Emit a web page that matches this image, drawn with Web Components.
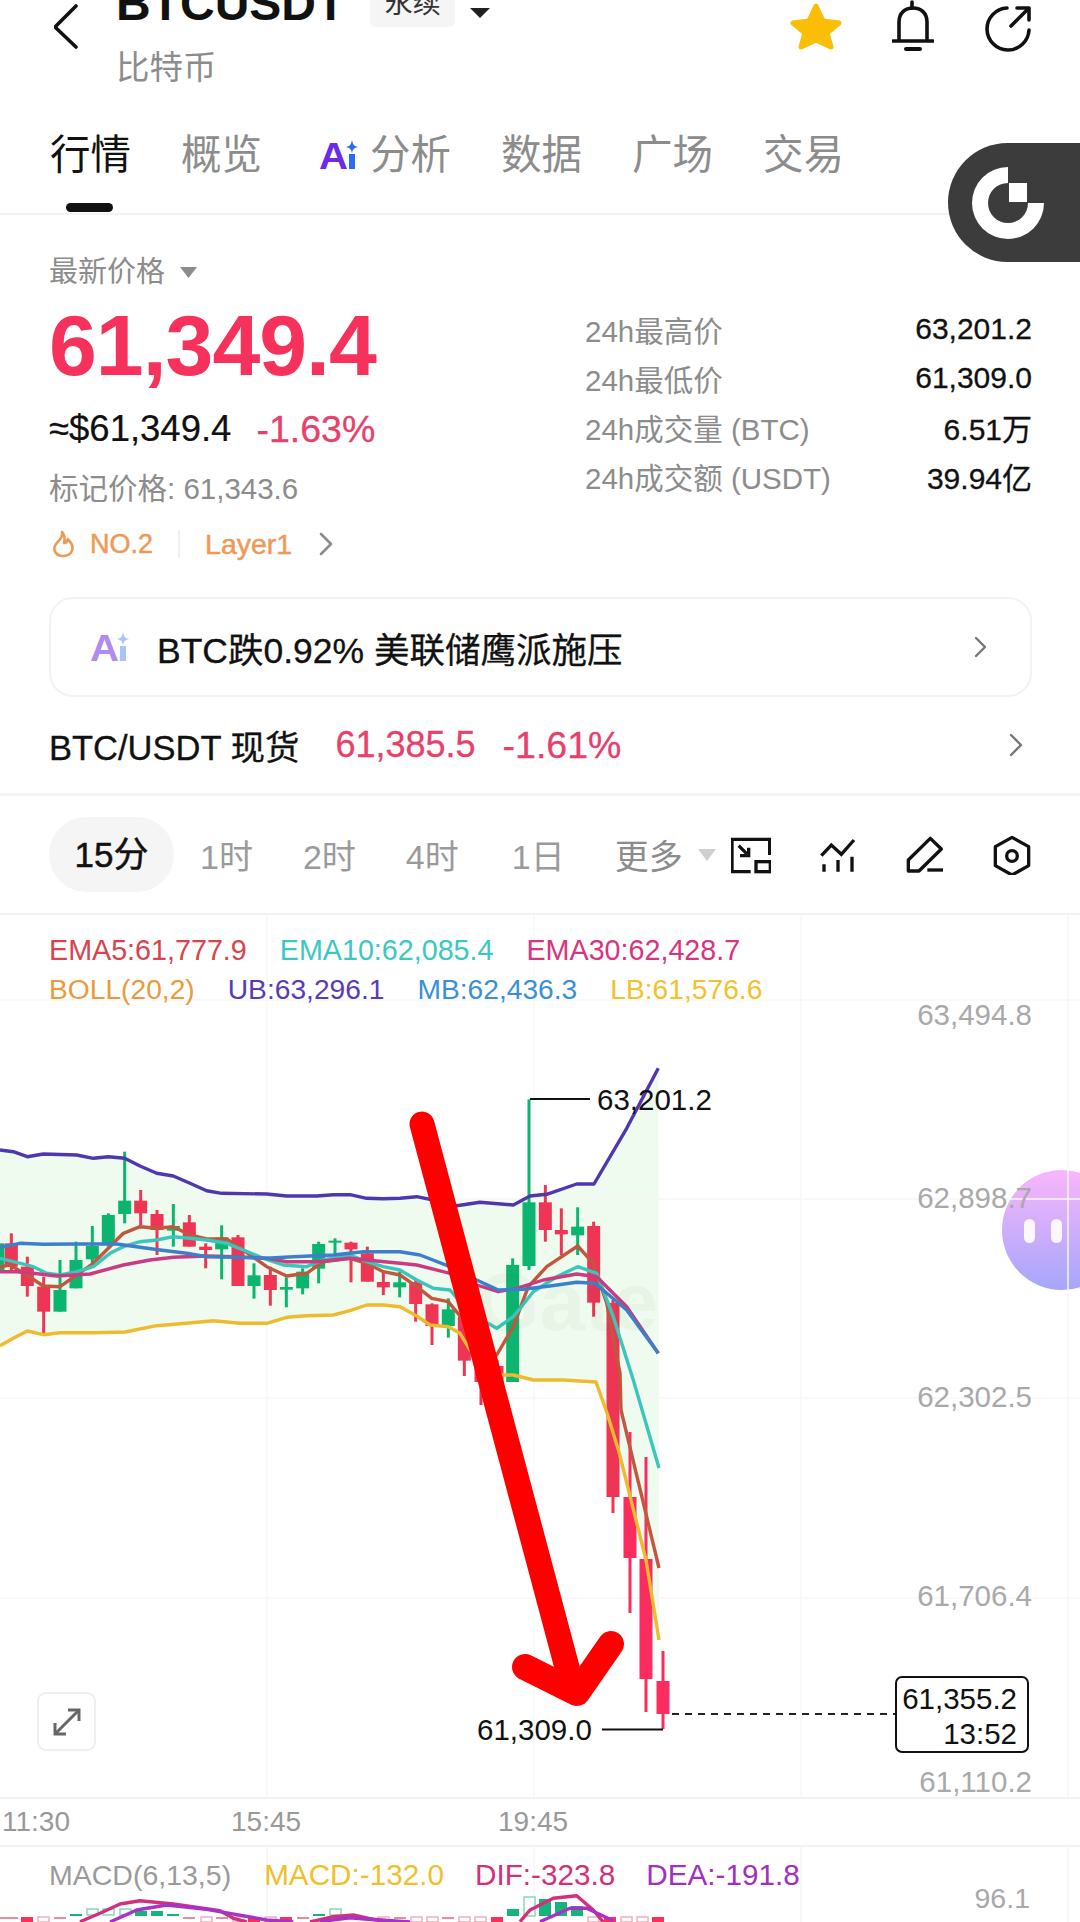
<!DOCTYPE html>
<html lang="zh">
<head>
<meta charset="utf-8">
<title>BTCUSDT</title>
<style>
html, body { margin: 0; padding: 0; background: #fff; }
body { font-family: "Liberation Sans", "Noto Sans CJK SC", sans-serif; }
</style>
</head>
<body>
<trade-page>
    <app-header></app-header>
    <market-tabs></market-tabs>
    <price-panel></price-panel>
    <news-card>BTC跌0.92% 美联储鹰派施压</news-card>
    <spot-row></spot-row>
    <interval-bar></interval-bar>
    <kline-chart></kline-chart>
    <time-axis></time-axis>
    <macd-panel></macd-panel>
    <gate-tab></gate-tab>
    <bot-bubble></bot-bubble>
</trade-page>

<script>
const FONT = '"Liberation Sans", "Noto Sans CJK SC", sans-serif';

class TradePage extends HTMLElement {
    constructor() {
        super();
        this.attachShadow({ mode: 'open' });
    }
    connectedCallback() {
        this.shadowRoot.innerHTML = `
            <style>
                :host { display: block; position: relative; width: 1080px; height: 1922px; overflow: hidden; background: #fff; font-family: ${FONT}; }
            </style>
            <slot></slot>
        `;
    }
}

class AppHeader extends HTMLElement {
    constructor() {
        super();
        this.attachShadow({ mode: 'open' });
    }
    connectedCallback() {
        this.shadowRoot.innerHTML = `
            <style>
                :host { display: flex; height: 118px; padding: 0 48px 0 54px; box-sizing: border-box; }
                .back { width: 24px; height: 52px; flex: none; margin-right: 38px; }
                .titles { flex: 1; }
                .line { display: flex; align-items: center; height: 48px; margin-top: -20px; }
                h1 { margin: 0; font-size: 48px; line-height: 48px; font-weight: 700; color: #111; }
                .badge { margin-left: 25px; width: 85px; height: 46px; background: #f5f5f5; border-radius: 6px; font-size: 28px; line-height: 46px; text-align: center; color: #333; }
                .caret { margin: 18px 0 0 15px; width: 20px; height: 10px; }
                .coin { margin-top: 20px; font-size: 33.5px; line-height: 40px; color: #8c8c8c; }
                .icons { display: flex; gap: 50px; flex: none; }
                .icons svg { height: 52px; display: block; }
            </style>
            <svg class="back" viewBox="54 0 24 52" fill="none" stroke="#111" stroke-width="3.6" stroke-linecap="round" stroke-linejoin="round">
                <path d="M76 6 L55 27 L76 47"/>
            </svg>
            <div class="titles">
                <div class="line">
                    <h1>BTCUSDT</h1>
                    <span class="badge">永续</span>
                    <svg class="caret" viewBox="0 0 20 10"><path d="M0 0 H20 L10 10 Z" fill="#222"/></svg>
                </div>
                <div class="coin">比特币</div>
            </div>
            <div class="icons">
                <svg style="width:52px" viewBox="790 0 52 52">
                    <path d="M816 6 L823 21 L839 23 L827 33 L831 47 L816 40 L801 47 L805 33 L793 23 L809 21 Z" fill="#fbbe07" stroke="#fbbe07" stroke-width="5" stroke-linejoin="round"/>
                </svg>
                <svg style="width:42px" viewBox="892 0 42 52" fill="none" stroke="#111" stroke-width="3.6" stroke-linecap="round">
                    <path d="M912 2 V8"/>
                    <path d="M899 40 V22 C899 13 905 8 913 8 C921 8 927 13 927 22 V40"/>
                    <path d="M893 41 H933"/>
                    <path d="M906 49 H920" stroke-width="4"/>
                </svg>
                <svg style="width:47px;margin-left:1px" viewBox="985 0 47 52" fill="none" stroke="#111" stroke-width="3.6" stroke-linecap="round" stroke-linejoin="round">
                    <path d="M1007 8 A21 21 0 1 0 1029 30"/>
                    <path d="M1011 26 L1028 9"/>
                    <path d="M1017 8 H1029 V20"/>
                </svg>
            </div>
        `;
    }
}

class AiMark extends HTMLElement {
    static get observedAttributes() {
        return ['soft'];
    }
    constructor() {
        super();
        this.attachShadow({ mode: 'open' });
    }
    connectedCallback() {
        const soft = this.hasAttribute('soft');
        const a = soft ? '#b08cf0' : '#6a2ce6';
        const b = soft ? '#a9c4f7' : '#2a6cf6';
        this.shadowRoot.innerHTML = `
            <style>
                :host { display: inline-block; width: 40px; height: 32px; }
                svg { display: block; width: 100%; height: 100%; overflow: visible; }
                text { font: 700 36px/32px "Liberation Sans", sans-serif; }
            </style>
            <svg viewBox="0 0 40 32">
                <text x="0" y="30" fill="${a}" textLength="29" lengthAdjust="spacingAndGlyphs">A</text>
                <rect x="30" y="15" width="6" height="15" fill="${b}"/>
                <path d="M33 1 C34 6 35 7 39 8 C35 9 34 10 33 14 C32 10 31 9 27 8 C31 7 32 6 33 1 Z" fill="${b}"/>
            </svg>
        `;
    }
}

class MarketTabs extends HTMLElement {
    constructor() {
        super();
        this.attachShadow({ mode: 'open' });
    }
    connectedCallback() {
        this.shadowRoot.innerHTML = `
            <style>
                :host { display: flex; align-items: flex-start; position: relative; gap: 50px; height: 97px; padding: 17px 0 0 50px; box-sizing: border-box; border-bottom: 2px solid #f2f2f2; font-size: 40.5px; line-height: 40px; color: #8c8c8c; }
                .on { color: #111; position: relative; }
                .on::after { content: ""; position: absolute; left: 16px; top: 68px; width: 47px; height: 9px; border-radius: 5px; background: #111; }
                .ai { display: flex; align-items: center; gap: 11px; margin-left: 7px; height: 40px; }
            </style>
            <span class="on">行情</span>
            <span>概览</span>
            <span class="ai"><ai-mark></ai-mark><span>分析</span></span>
            <span>数据</span>
            <span>广场</span>
            <span>交易</span>
        `;
    }
}

class StatRow extends HTMLElement {
    constructor() {
        super();
        this.attachShadow({ mode: 'open' });
    }
    connectedCallback() {
        this.shadowRoot.innerHTML = `
            <style>
                :host { display: flex; justify-content: space-between; align-items: center; height: 49px; }
                .k { font-size: 29.5px; color: #8c8c8c; }
                .v { font-size: 30px; color: #111; -webkit-text-stroke: .3px #111; }
            </style>
            <span class="k">${this.getAttribute('label')}</span>
            <span class="v"><slot></slot></span>
        `;
    }
}

class PricePanel extends HTMLElement {
    constructor() {
        super();
        this.attachShadow({ mode: 'open' });
    }
    connectedCallback() {
        this.shadowRoot.innerHTML = `
            <style>
                :host { display: grid; grid-template-columns: 536px 1fr; padding: 39px 48px 35px 49px; }
                .head { display: flex; align-items: center; gap: 15px; font-size: 29px; line-height: 36px; color: #8c8c8c; height: 36px; }
                .head svg { width: 17px; height: 11px; }
                .big { margin-top: 12px; font-size: 86px; line-height: 86px; font-weight: 700; letter-spacing: -1px; color: #f6315b; }
                .sub { display: flex; gap: 25px; margin-top: 21px; font-size: 36.5px; line-height: 40px; color: #111; -webkit-text-stroke: .2px #111; }
                .sub .pct { font-size: 37.5px; color: #e8406a; -webkit-text-stroke: .3px #e8406a; }
                .mark { margin-top: 22px; font-size: 29.5px; line-height: 36px; color: #8c8c8c; }
                .tags { display: flex; align-items: center; margin-top: 19px; height: 36px; font-size: 27px; color: #ee9a57; -webkit-text-stroke: .5px #ee9a57; }
                .tags .fire { width: 24px; height: 28px; margin: 0 15px 0 2px; }
                .tags .sep { width: 2px; height: 28px; background: #f0f0f0; margin: 0 25px; }
                .tags .layer { font-size: 28.5px; }
                .tags .go { width: 14px; height: 24px; margin-left: 27px; }
                .stats { margin-top: 50px; }
            </style>
            <div>
                <div class="head">最新价格 <svg viewBox="0 0 17 11"><path d="M0 0 H17 L8.5 11 Z" fill="#8c8c8c"/></svg></div>
                <div class="big">61,349.4</div>
                <div class="sub"><span>≈$61,349.4</span><span class="pct">-1.63%</span></div>
                <div class="mark">标记价格: 61,343.6</div>
                <div class="tags">
                    <svg class="fire" viewBox="0 0 24 28" fill="none" stroke="#ee9a57" stroke-width="2.6" stroke-linejoin="round"><path d="M11 2 C12 7 9 9 5 14 C1 20 5 26 12 26 C19 26 23 21 21 15 C20 12 18 11 17 9 C16 12 15 13 13 13 C14 9 14 5 11 2 Z"/></svg>
                    <span>NO.2</span>
                    <span class="sep"></span>
                    <span class="layer">Layer1</span>
                    <svg class="go" viewBox="0 0 14 24" fill="none" stroke="#8c8c8c" stroke-width="2.6" stroke-linecap="round" stroke-linejoin="round"><path d="M2 2 L12 12 L2 22"/></svg>
                </div>
            </div>
            <div class="stats">
                <stat-row label="24h最高价">63,201.2</stat-row>
                <stat-row label="24h最低价">61,309.0</stat-row>
                <stat-row label="24h成交量 (BTC)">6.51万</stat-row>
                <stat-row label="24h成交额 (USDT)">39.94亿</stat-row>
            </div>
        `;
    }
}

class NewsCard extends HTMLElement {
    constructor() {
        super();
        this.attachShadow({ mode: 'open' });
    }
    connectedCallback() {
        this.shadowRoot.innerHTML = `
            <style>
                :host { display: flex; align-items: center; height: 100px; margin: 0 48px 0 49px; padding: 0 42px 0 39px; box-sizing: border-box; border: 2px solid #f3f3f3; border-radius: 24px; font-size: 35.5px; color: #111; -webkit-text-stroke: .3px #111; }
                ai-mark { margin-right: 27px; }
                .t { flex: 1; }
                svg { width: 14px; height: 24px; }
            </style>
            <ai-mark soft></ai-mark>
            <span class="t"><slot></slot></span>
            <svg viewBox="0 0 14 24" fill="none" stroke="#777" stroke-width="2.4" stroke-linecap="round" stroke-linejoin="round"><path d="M2 3 L11 12 L2 21"/></svg>
        `;
    }
}

class SpotRow extends HTMLElement {
    constructor() {
        super();
        this.attachShadow({ mode: 'open' });
    }
    connectedCallback() {
        this.shadowRoot.innerHTML = `
            <style>
                :host { display: flex; align-items: center; height: 99px; padding: 0 56px 0 49px; box-sizing: border-box; border-bottom: 3px solid #f3f3f3; font-size: 34.5px; color: #111; }
                .pair { -webkit-text-stroke: .3px #111; margin-right: 36px; }
                .p { font-size: 36px; color: #e8406a; -webkit-text-stroke: .3px #e8406a; margin-right: 27px; }
                .pc { font-size: 37.5px; margin-right: 0; }
                .g { flex: 1; }
                svg { width: 16px; height: 26px; }
            </style>
            <span class="pair">BTC/USDT 现货</span>
            <span class="p">61,385.5</span>
            <span class="p pc">-1.61%</span>
            <span class="g"></span>
            <svg viewBox="0 0 16 26" fill="none" stroke="#777" stroke-width="2.4" stroke-linecap="round" stroke-linejoin="round"><path d="M3 3 L13 13 L3 23"/></svg>
        `;
    }
}

class IntervalBar extends HTMLElement {
    constructor() {
        super();
        this.attachShadow({ mode: 'open' });
    }
    connectedCallback() {
        this.shadowRoot.innerHTML = `
            <style>
                :host { display: flex; align-items: center; height: 119px; padding: 0 44px 0 49px; box-sizing: border-box; border-bottom: 2px solid #f3f3f3; font-size: 34px; color: #9a9a9a; }
                .pill { width: 125px; height: 75px; line-height: 75px; text-align: center; font-size: 35px; background: #f5f5f5; border-radius: 38px; color: #111; -webkit-text-stroke: .5px #111; margin-right: 26px; flex: none; }
                .i { margin-right: 50px; }
                .i.day { margin-left: 3px; margin-right: 47px; }
                .more { margin-left: 3px; margin-right: 15px; color: #8c8c8c; }
                .c { width: 18px; height: 12px; margin-right: 15px; flex: none; }
                .tools { display: flex; gap: 47px; flex: none; }
                .tools svg { width: 40px; height: 40px; display: block; }
            </style>
            <span class="pill">15分</span>
            <span class="i">1时</span>
            <span class="i">2时</span>
            <span class="i">4时</span>
            <span class="i day">1日</span>
            <span class="more">更多</span>
            <svg class="c" viewBox="0 0 18 12"><path d="M0 0 H18 L9 12 Z" fill="#cfcfcf"/></svg>
            <div class="tools">
                <svg viewBox="39 30 120 120" fill="none" stroke="#111" stroke-width="10" stroke-linejoin="miter">
                    <path d="M98 140 H42 V43 H155 V90"/>
                    <rect x="114" y="110" width="43" height="30"/>
                    <path d="M62 62 L92 92 M66 92 H92 V68"/>
                </svg>
                <svg viewBox="300 30 120 120" fill="none" stroke="#111" stroke-width="10">
                    <path d="M310 92 L340 60 L370 88 L408 45"/>
                    <path d="M318 118 V140 M360 105 V140 M402 95 V140"/>
                </svg>
                <svg viewBox="561 30 120 120" fill="none" stroke="#111" stroke-width="10" stroke-linejoin="round">
                    <path d="M571 138 V105 L637 40 L670 72 L603 138 Z"/>
                    <path d="M628 135 H675"/>
                </svg>
                <svg viewBox="822 30 120 120" fill="none" stroke="#111" stroke-width="10" stroke-linejoin="round">
                    <path d="M882 37 L932 65 V122 L882 150 L832 122 V65 Z"/>
                    <circle cx="882" cy="93" r="16"/>
                </svg>
            </div>
        `;
    }
}

// points read off the reference crops, x/3 and y/3 from each crop's corner
const crop = (list, x0, y0) => list.map(([x, y]) => [x / 3 + x0, y / 3 + y0]);
const full = (list) => list.map(([x, y]) => [x, y]);
const pts = (list) => list.map(([x, y]) => `${x.toFixed(1)},${y.toFixed(1)}`).join(' ');

const UB = [...crop([[0,330],[40,335],[82,350],[130,342],[230,345],[280,355],[325,350],[374,355],[420,378],[470,400],[520,408],[570,430],[620,452],[665,460],[800,462],[860,468],[950,468],[1000,464],[1050,464],[1100,475],[1150,476]], 0, 1040),
    ...crop([[0,475],[50,470],[100,480],[170,497],[240,487],[340,495],[390,468],[440,463],[530,432],[582,432],[680,265],[775,85]], 400, 1040)];
const LB = [...crop([[0,917],[40,895],[82,873],[130,884],[180,878],[280,878],[375,876],[470,857],[560,850],[640,842],[720,850],[800,850],[860,832],[920,827],[1000,825],[1050,812],[1100,795],[1150,795]], 0, 1040),
    ...crop([[0,800],[50,828],[90,855],[145,860],[180,880],[210,930],[300,1005],[340,1005],[400,1020],[490,1020]], 400, 1040),
    ...full([[596,1382],[607,1413],[619,1452],[646,1560],[659,1640]])];
const EMA5 = [...crop([[0,680],[30,675],[80,705],[130,738],[180,740],[230,705],[280,670],[325,625],[370,580],[420,560],[470,565],[520,560],[570,585],[620,597],[680,597],[730,630],[800,680],[860,708],[920,700],[970,665],[1050,655],[1100,670],[1150,695]], 0, 1040),
    ...crop([[0,705],[50,740],[95,775],[145,785],[190,840],[240,925],[290,945],[340,860],[385,740],[440,680],[533,618],[580,670],[620,790],[660,1000]], 400, 1040),
    ...full([[621,1410],[659,1568]])];
const EMA10 = [...crop([[0,655],[40,665],[100,680],[140,700],[180,705],[230,695],[280,680],[330,640],[370,620],[420,605],[470,600],[520,590],[570,595],[620,600],[680,610],[730,630],[790,655],[850,675],[920,680],[970,660],[1050,645],[1100,665],[1150,680]], 0, 1040),
    ...crop([[0,690],[50,720],[100,745],[150,750],[210,820],[290,865],[340,830],[400,755],[470,710],[533,680],[590,700],[640,830],[700,1020]], 400, 1040),
    ...full([[659,1468]])];
const EMA30 = [...crop([[0,695],[50,695],[100,700],[170,708],[270,702],[370,675],[450,660],[520,652],[620,648],[700,650],[800,655],[860,665],[950,665],[1050,655],[1100,660]], 0, 1040),
    ...crop([[0,670],[50,675],[150,700],[230,735],[295,755],[350,745],[430,720],[530,702],[590,710],[680,800],[775,940]], 400, 1040)];
const MB = [...crop([[0,622],[60,610],[130,613],[230,612],[350,612],[420,622],[480,630],[560,640],[620,650],[720,652],[800,655],[880,650],[1000,645],[1090,635]], 0, 1040),
    ...crop([[0,635],[60,645],[150,680],[230,720],[295,750],[370,748],[450,738],[530,727],[585,730],[680,810],[775,940]], 400, 1040)];

const R = '#ee3554', G = '#0cb56f', R2 = '#fb2c5e';
// x, wick top, wick bottom, body top, body bottom, colour
const CANDLES = [
    ...[
        [-6,610,735,610,690,G],[34,580,690,610,680,R],[82,650,770,680,738,R],[131,710,880,740,815,R],[180,660,815,750,815,G],
        [228,605,745,660,745,G],[277,558,680,618,658,G],[325,520,620,525,615,G],[374,335,550,482,522,G],[422,450,555,482,520,R],
        [471,510,645,522,570,R],[520,492,620,558,572,G],[568,525,620,547,620,R],[617,610,685,620,630,R],[665,556,718,592,628,G],
        [714,585,738,592,738,R],[762,670,776,706,738,G],[811,680,797,705,750,R],[859,712,802,741,749,G],[908,685,763,695,745,G],
        [956,605,730,612,686,G],[1005,595,650,602,608,G],[1053,605,727,608,628,R],[1102,620,725,640,725,R],[1150,695,765,726,742,R],
        [1199,695,772,727,742,G],[1247,720,845,727,792,R],
    ].map(([x, a, b, c, d, col]) => [x / 3, a / 3 + 1040, b / 3 + 1040, c / 3 + 1040, d / 3 + 1040, col]),
    ...[
        [96,790,915,793,858,R],[145,775,893,808,858,G],[193,830,1008,830,962,R],
        [338,655,1026,675,1026,G],[387,178,690,487,678,G],[436,435,605,487,570,R],[484,505,645,570,583,R],[533,502,645,560,586,G],[581,545,830,558,788,R],
    ].map(([x, a, b, c, d, col]) => [x / 3 + 400, a / 3 + 1040, b / 3 + 1040, c / 3 + 1040, d / 3 + 1040, col]),
    [481,1355,1405,1360,1382,R],[497,1360,1392,1366,1384,R],
    [613,1300,1513,1303,1497,R],[630,1432,1613,1497,1558,R2],[646,1457,1712,1559,1679,R2],[663,1651,1729,1681,1714,R2],
];

class KlineChart extends HTMLElement {
    constructor() {
        super();
        this.attachShadow({ mode: 'open' });
    }
    connectedCallback() {
        this.render();
    }
    candles() {
        return CANDLES.map(([x, a, b, c, d, col]) => `
            <rect x="${x - 1.5}" y="${a}" width="3" height="${b - a}" fill="${col}"/>
            <rect x="${x - 6.5}" y="${c}" width="13" height="${d - c}" fill="${col}"/>`).join('');
    }
    lines() {
        const line = (list, col) => `<polyline points="${pts(list)}" fill="none" stroke="${col}" stroke-width="3.4" stroke-linejoin="round"/>`;
        return line(LB, '#eeba2e') + line(EMA5, '#c2573f') + line(EMA10, '#3bc6bb') + line(EMA30, '#c93c82') + line(MB, '#3d7fca') + line(UB, '#4f37b0');
    }
    label(text, y, cls, style) {
        return `<span class="lbl ${cls}" style="top:${y - 915 - 18}px;${style}">${text}</span>`;
    }
    render() {
        const grid = [267, 534, 801, 1068].map((x) => `<line x1="${x}" x2="${x}" y1="915" y2="1797" stroke="#f7f7f7" stroke-width="1.5"/>`).join('')
            + [1000, 1199, 1398, 1598].map((y) => `<line x1="0" x2="1080" y1="${y}" y2="${y}" stroke="#f7f7f7" stroke-width="1.5"/>`).join('');
        const band = pts(UB) + ' ' + pts([...LB].reverse()) + ' 0,1346';
        this.shadowRoot.innerHTML = `
            <style>
                :host { display: block; position: relative; z-index: 2; height: 882px; box-sizing: border-box; font-size: 28.7px; }
                svg { position: absolute; left: 0; top: 0; width: 1080px; height: 882px; }
                .legend { position: relative; padding: 16px 0 0 49px; }
                .row { display: flex; gap: 33px; height: 39px; line-height: 39px; }
                .row.b { font-size: 28.2px; }
                .lbl { position: absolute; line-height: 36px; white-space: nowrap; font-size: 29.5px; }
                .axis { right: 48px; color: #a9a9a9; }
                .mark { color: #111; }
                .wm { position: absolute; right: 422px; top: 346px; font-size: 82px; line-height: 82px; font-weight: 700; color: rgba(40,80,40,.04); }
                .box { position: absolute; left: 895px; top: 761px; width: 134px; height: 77px; box-sizing: border-box; border: 2px solid #111; border-radius: 7px; background: #fff; padding: 3px 10px 0 0; text-align: right; font-size: 29.5px; line-height: 35px; color: #111; }
                .zoom { position: absolute; left: 37px; top: 777px; width: 59px; height: 59px; box-sizing: border-box; background: #fff; border: 2px solid #efefef; border-radius: 9px; display: flex; align-items: center; justify-content: center; }
                .zoom svg { position: static; width: 32px; height: 32px; }
            </style>
            <svg viewBox="0 915 1080 882">
                <polygon points="${band}" fill="#effbee"/>
                ${grid}
                ${this.candles()}
                ${this.lines()}
                <path d="M530 1099 H590 M602 1729.5 H663" stroke="#111" stroke-width="2" fill="none"/>
                <path d="M672 1714 H896" stroke="#222" stroke-width="2" stroke-dasharray="7 6" fill="none"/>
            </svg>
            <span class="wm">Gate</span>
            <div class="legend">
                <div class="row">
                    <span style="color:#d9434e">EMA5:61,777.9</span>
                    <span style="color:#3cc8c0">EMA10:62,085.4</span>
                    <span style="color:#d8347f">EMA30:62,428.7</span>
                </div>
                <div class="row b">
                    <span style="color:#e89a3c">BOLL(20,2)</span>
                    <span style="color:#5a3bb5">UB:63,296.1</span>
                    <span style="color:#3a8fd9">MB:62,436.3</span>
                    <span style="color:#f2c12e">LB:61,576.6</span>
                </div>
            </div>
            ${[['63,494.8', 1015], ['62,898.7', 1198], ['62,302.5', 1397], ['61,706.4', 1596], ['61,110.2', 1782]].map(([t, y]) => this.label(t, y, 'axis', '')).join('')}
            ${this.label('63,201.2', 1100, 'mark', 'left:597px')}
            ${this.label('61,309.0', 1730, 'mark', 'left:477px')}
            <svg viewBox="0 915 1080 882">
                <path d="M422 1124 L572 1686" stroke="#fe0000" stroke-width="25" stroke-linecap="round" fill="none"/>
                <path d="M525 1667 L577 1693 L611 1644" stroke="#fe0000" stroke-width="26" stroke-linecap="round" stroke-linejoin="round" fill="none"/>
            </svg>
            <div class="box">61,355.2<br>13:52</div>
            <div class="zoom">
                <svg viewBox="0 0 32 32" fill="none" stroke="#666" stroke-width="3"><path d="M5 27 L27 5"/><path d="M17 4 H28 V15" /><path d="M4 17 V28 H15"/></svg>
            </div>
        `;
    }
}

class TimeAxis extends HTMLElement {
    constructor() {
        super();
        this.attachShadow({ mode: 'open' });
    }
    connectedCallback() {
        this.shadowRoot.innerHTML = `
            <style>
                :host { display: flex; align-items: center; height: 50px; padding-left: 2px; box-sizing: border-box; border-top: 2px solid #f3f3f3; border-bottom: 2px solid #f3f3f3; font-size: 28px; color: #999; }
                span { width: 229px; }
                span + span { width: 267px; }
            </style>
            <span>11:30</span><span>15:45</span><span>19:45</span>
        `;
    }
}

class MacdPanel extends HTMLElement {
    constructor() {
        super();
        this.attachShadow({ mode: 'open' });
    }
    connectedCallback() {
        // 0 dash, 1 hollow, 2 solid; bars above the zero line are green
        const bars = [
            [2,'r',0],[12,'r',0],[27,'r',2],[43,'r',1],[60,'r',0],[76,'g',0],[92,'g',1],[108,'g',1],[125,'g',1],[141,'g',3],[157,'g',3],[173,'g',0],
            [189,'r',0],[206,'r',1],[222,'r',0],[238,'r',1],[254,'r',2],[270,'r',1],[286,'r',2],[303,'r',0],[319,'g',0],[335,'g',1],[351,'g',0],
            [367,'r',0],[383,'r',1],[400,'r',0],[416,'r',1],[432,'r',1],[448,'r',0],[464,'r',1],[480,'r',1],[497,'r',2],[513,'g',4],
            [529,'g',5],[545,'g',6],[561,'g',7],[577,'g',8],[593,'r',1],[610,'r',2],[626,'r',1],[642,'r',1],[658,'r',2],
        ];
        const rects = bars.map(([x, side, kind]) => {
            if (side === 'g') {
                const hollow = kind === 1 || kind === 5;
                const h = { 0: 2, 1: 5, 3: 5, 4: 7, 5: 19, 6: 17, 7: 14, 8: 10 }[kind];
                const top = 1916 - h;
                return hollow ? `<rect x="${x - 5}" y="${kind === 1 ? top - 2 : top}" width="11" height="${kind === 1 ? 6 : h}" fill="#fff" stroke="#8ad6b8" stroke-width="1.5"/>`
                    : `<rect x="${x - 6}" y="${top}" width="12" height="${h}" fill="#14b47a"/>`;
            }
            if (kind === 0) return `<rect x="${x - 6}" y="1917" width="12" height="2" fill="#e88aa0"/>`;
            if (kind === 1) return `<rect x="${x - 5}" y="1917" width="11" height="5" fill="#fff" stroke="#eeb0bf" stroke-width="1.5"/>`;
            return `<rect x="${x - 6}" y="1917" width="12" height="6" fill="#f8305c"/>`;
        }).join('');
        const line = (list, col) => `<polyline points="${pts(list)}" fill="none" stroke="${col}" stroke-width="3.4" stroke-linejoin="round"/>`;
        const dif = [
            crop([[240,125],[300,100],[360,72],[420,62],[520,72],[660,92],[700,115],[740,126]], 0, 1880),
            crop([[930,126],[1000,110],[1060,105],[1120,118],[1200,126]], 0, 1880),
            crop([[0,125],[30,90],[100,55],[170,47],[220,90],[250,126]], 520, 1880),
        ];
        const dea = [
            crop([[330,126],[410,90],[500,75],[620,88],[800,120],[880,126]], 0, 1880),
            crop([[960,125],[1050,113],[1130,120],[1230,126]], 0, 1880),
            crop([[60,125],[150,85],[200,85],[280,122]], 520, 1880),
        ];
        this.shadowRoot.innerHTML = `
            <style>
                :host { display: block; position: relative; height: 75px; font-size: 29.7px; }
                svg { position: absolute; left: 0; top: 0; width: 1080px; height: 75px; }
                .legend { position: relative; display: flex; gap: 33px; padding-left: 49px; height: 56px; line-height: 56px; }
                .legend .dif { margin-left: -2px; }
                .legend .dea { margin-left: -2px; }
                .v { position: absolute; right: 50px; top: 34px; line-height: 34px; font-size: 28.5px; color: #a9a9a9; }
            </style>
            <svg viewBox="0 1847 1080 75">
                ${[267, 534, 801, 1068].map((x) => `<line x1="${x}" x2="${x}" y1="1847" y2="1922" stroke="#f6f6f6" stroke-width="1.5"/>`).join('')}
                ${rects}
                ${dif.map((l) => line(l, '#d2307c')).join('')}
                ${dea.map((l) => line(l, '#a832c8')).join('')}
            </svg>
            <div class="legend">
                <span style="color:#9a9a9a;font-size:28.5px">MACD(6,13,5)</span>
                <span style="color:#f0bf2e">MACD:-132.0</span>
                <span class="dif" style="color:#d4307a">DIF:-323.8</span>
                <span class="dea" style="color:#a030c0">DEA:-191.8</span>
            </div>
            <span class="v">96.1</span>
        `;
    }
}

class GateTab extends HTMLElement {
    constructor() {
        super();
        this.attachShadow({ mode: 'open' });
    }
    connectedCallback() {
        this.shadowRoot.innerHTML = `
            <style>
                :host { position: absolute; left: 948px; top: 143px; width: 132px; height: 119px; border-radius: 60px 0 0 60px; background: #3c3c3c; z-index: 3; }
                svg { display: block; width: 132px; height: 119px; }
            </style>
            <svg viewBox="948 143 132 119">
                <path d="M1008 167 A36 36 0 1 0 1044 203 H1028 A20 20 0 1 1 1008 183 Z" fill="#fff"/>
                <rect x="1009" y="183" width="18" height="19" fill="#fff"/>
            </svg>
        `;
    }
}

class BotBubble extends HTMLElement {
    constructor() {
        super();
        this.attachShadow({ mode: 'open' });
    }
    connectedCallback() {
        this.shadowRoot.innerHTML = `
            <style>
                :host { position: absolute; left: 1002px; top: 1170px; width: 120px; height: 120px; border-radius: 50%; background: linear-gradient(#f8b6fb, #a6a6fb); display: flex; gap: 16px; padding: 49px 0 0 22px; box-sizing: border-box; z-index: 1; }
                i { display: block; width: 11px; height: 24px; border-radius: 6px; background: #fff; opacity: .9; }
            </style>
            <i></i><i></i>
        `;
    }
}

customElements.define('trade-page', TradePage);
customElements.define('app-header', AppHeader);
customElements.define('ai-mark', AiMark);
customElements.define('market-tabs', MarketTabs);
customElements.define('stat-row', StatRow);
customElements.define('price-panel', PricePanel);
customElements.define('news-card', NewsCard);
customElements.define('spot-row', SpotRow);
customElements.define('interval-bar', IntervalBar);
customElements.define('kline-chart', KlineChart);
customElements.define('time-axis', TimeAxis);
customElements.define('macd-panel', MacdPanel);
customElements.define('gate-tab', GateTab);
customElements.define('bot-bubble', BotBubble);
</script>
</body>
</html>
